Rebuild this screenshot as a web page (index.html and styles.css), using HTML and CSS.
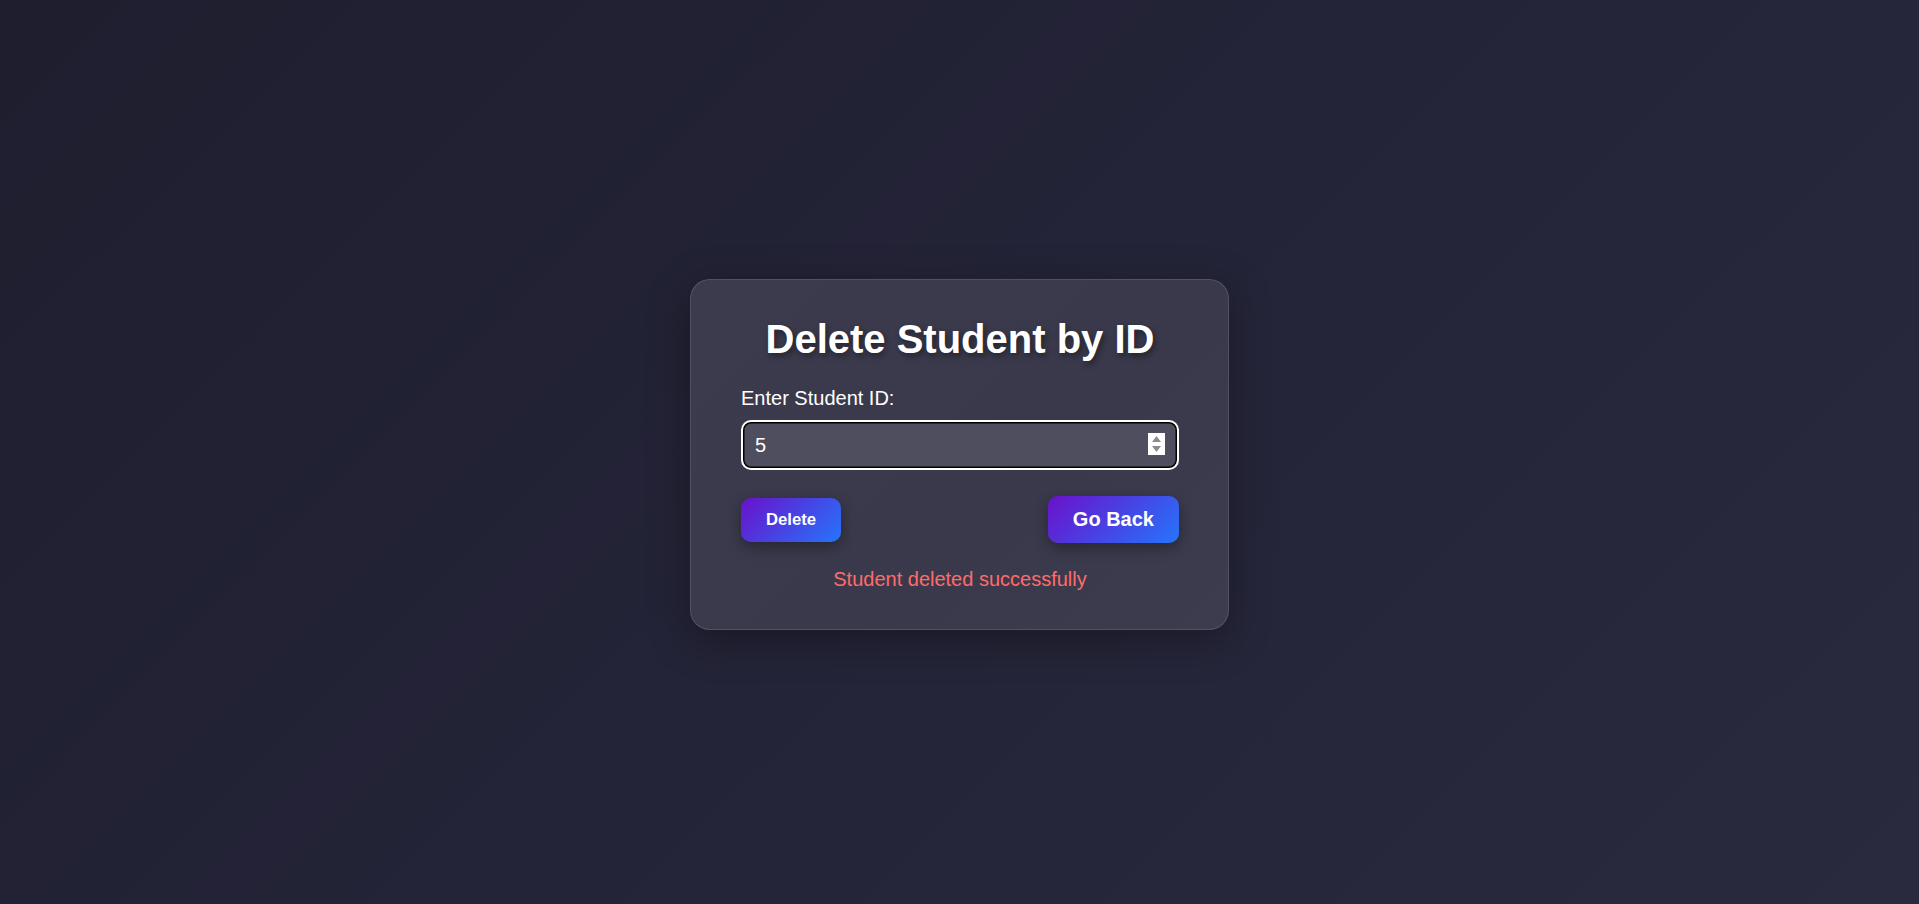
FILE: index.html
```html
<!DOCTYPE html>
<html lang="en">
<head>
<meta charset="utf-8">
<title>Delete Student by ID</title>
<link rel="stylesheet" href="styles.css">
</head>
<body>
  <main class="card">
    <h1 class="title">Delete Student by ID</h1>
    <label class="label" for="sid">Enter Student ID:</label>
    <div class="field">
      <input class="input" id="sid" type="number" value="5">
      <span class="spin" aria-hidden="true">
        <svg width="17" height="22" viewBox="0 0 17 22">
          <rect width="17" height="22" fill="#ffffff"/>
          <path d="M8.5 3 L13 9 L4 9 Z" fill="#8c8c8c"/>
          <path d="M4 13 L13 13 L8.5 19 Z" fill="#8c8c8c"/>
        </svg>
      </span>
    </div>
    <div class="actions">
      <button class="btn btn-delete" type="button">Delete</button>
      <a class="btn btn-back" href="#">Go Back</a>
    </div>
    <p class="message">Student deleted successfully</p>
  </main>
</body>
</html>
```

FILE: styles.css
```css
* { box-sizing: border-box; }

html, body { height: 100%; }

body {
  margin: 0;
  min-height: 100vh;
  padding-top: 5px;
  display: flex;
  align-items: center;
  justify-content: center;
  background: linear-gradient(135deg, #1f1e2f 0%, #242438 50%, #2a2a3f 100%);
  font-family: "Liberation Sans", Arial, sans-serif;
  color: #ffffff;
}

.card {
  width: 539px;
  padding: 36px 49px 38px 50px;
  background: linear-gradient(135deg, #3c3b4e 0%, #3a394b 60%, #3d3c4f 100%);
  border: 1px solid rgba(255, 255, 255, 0.12);
  border-radius: 20px;
  box-shadow: 0 10px 40px rgba(0, 0, 0, 0.35);
  display: flex;
  flex-direction: column;
}

.title {
  margin: 0;
  font-size: 40px;
  line-height: 46px;
  font-weight: 700;
  text-align: center;
  text-shadow: 2px 3px 6px rgba(0, 0, 0, 0.45);
}

.label {
  margin-top: 25px;
  font-size: 20px;
  line-height: 23px;
  color: #ffffff;
}

.field {
  position: relative;
  margin-top: 10px;
}

.input {
  display: block;
  width: 100%;
  height: 50px;
  padding: 0 12px;
  font-family: "Liberation Sans", Arial, sans-serif;
  font-size: 20px;
  color: #ffffff;
  background: #4f4e5f;
  border: 2px solid #ffffff;
  border-radius: 10px;
  box-shadow: inset 0 0 0 1.5px #000000;
  outline: none;
  appearance: textfield;
  -moz-appearance: textfield;
}

.input::-webkit-inner-spin-button,
.input::-webkit-outer-spin-button {
  -webkit-appearance: none;
  margin: 0;
}

.spin {
  position: absolute;
  right: 14px;
  top: 13px;
  width: 17px;
  height: 22px;
  display: block;
}

.spin svg { display: block; }

.actions {
  margin-top: 26px;
  display: flex;
  justify-content: space-between;
  align-items: center;
}

.btn {
  display: inline-block;
  border: none;
  border-radius: 10px;
  color: #ffffff;
  font-family: "Liberation Sans", Arial, sans-serif;
  font-weight: 700;
  text-decoration: none;
  background: linear-gradient(135deg, #6a11cb 0%, #2575fc 100%);
  box-shadow: 0 5px 14px rgba(0, 0, 0, 0.35);
  cursor: pointer;
}

.btn-delete {
  font-size: 16.67px;
  line-height: 19px;
  padding: 12.5px 25px;
}

.btn-back {
  font-size: 20px;
  line-height: 23px;
  padding: 12px 25px;
}

.message {
  margin: 25px 0 0;
  font-size: 20px;
  line-height: 23px;
  text-align: center;
  color: #ff6b6b;
}
```
